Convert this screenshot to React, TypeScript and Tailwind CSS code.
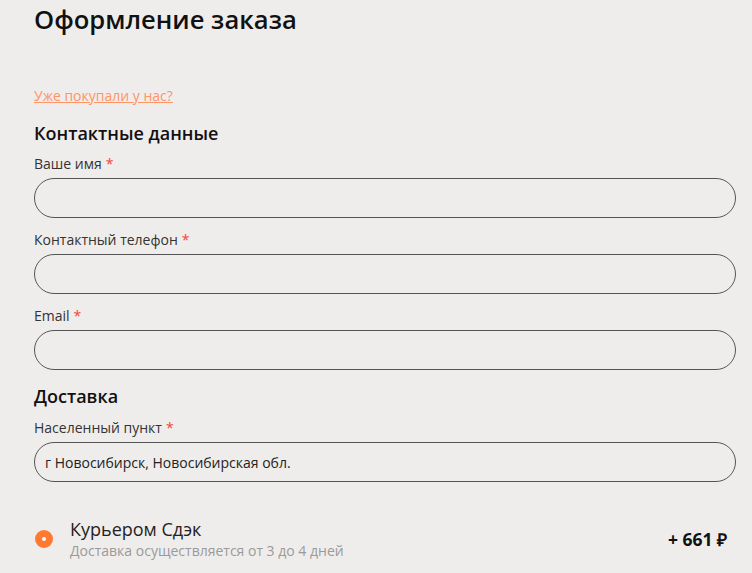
export default function App() {
  const fields = [
    { label: 'Ваше имя', value: '' },
    { label: 'Контактный телефон', value: '' },
    { label: 'Email', value: '' },
  ];

  return (
    <div className="min-h-screen bg-[#efedec] pl-[34px] pr-4 pt-[2px] font-['Open_Sans',sans-serif] text-[#1a1a1a]">
      <h1 className="text-[25.6px] leading-9 font-semibold text-[#111]">Оформление заказа</h1>

      <a href="#" className="mt-12 block text-sm leading-5 text-[#ff9466] underline">
        Уже покупали у нас?
      </a>

      <h2 className="mt-[14px] text-lg leading-[26px] font-semibold text-[#111]">Контактные данные</h2>

      <div className="mt-2">
        {fields.map((f) => (
          <div key={f.label} className="mb-3">
            <label className="mb-1 block text-sm leading-5 text-[#333]">
              {f.label}
              <span className="ml-1 text-[#f0453a]">*</span>
            </label>
            <input
              defaultValue={f.value}
              className="h-10 w-full rounded-full border border-[#555] bg-transparent px-[10px] text-sm outline-none"
            />
          </div>
        ))}
      </div>

      <h2 className="text-lg leading-7 font-semibold text-[#111]">Доставка</h2>

      <div className="mt-2">
        <label className="mb-1 block text-sm leading-5 text-[#333]">
          Населенный пункт
          <span className="ml-1 text-[#f0453a]">*</span>
        </label>
        <input
          defaultValue="г Новосибирск, Новосибирская обл."
          className="h-10 w-full rounded-full border border-[#555] bg-transparent px-[10px] text-sm text-[#222] outline-none"
        />
      </div>

      <div className="mt-[35px] flex items-center pr-[9px]">
        <span className="ml-px flex h-[18px] w-[18px] items-center justify-center rounded-full bg-[#ff7a30]">
          <span className="h-1 w-1 rounded-full bg-white" />
        </span>
        <div className="ml-[17px] flex-1">
          <div className="text-lg leading-6 text-[#222]">Курьером Сдэк</div>
          <div className="text-sm leading-5 text-[#9a9a9a]">Доставка осуществляется от 3 до 4 дней</div>
        </div>
        <div className="text-[17.5px] font-bold text-[#111]">+ 661 ₽</div>
      </div>
    </div>
  );
}
